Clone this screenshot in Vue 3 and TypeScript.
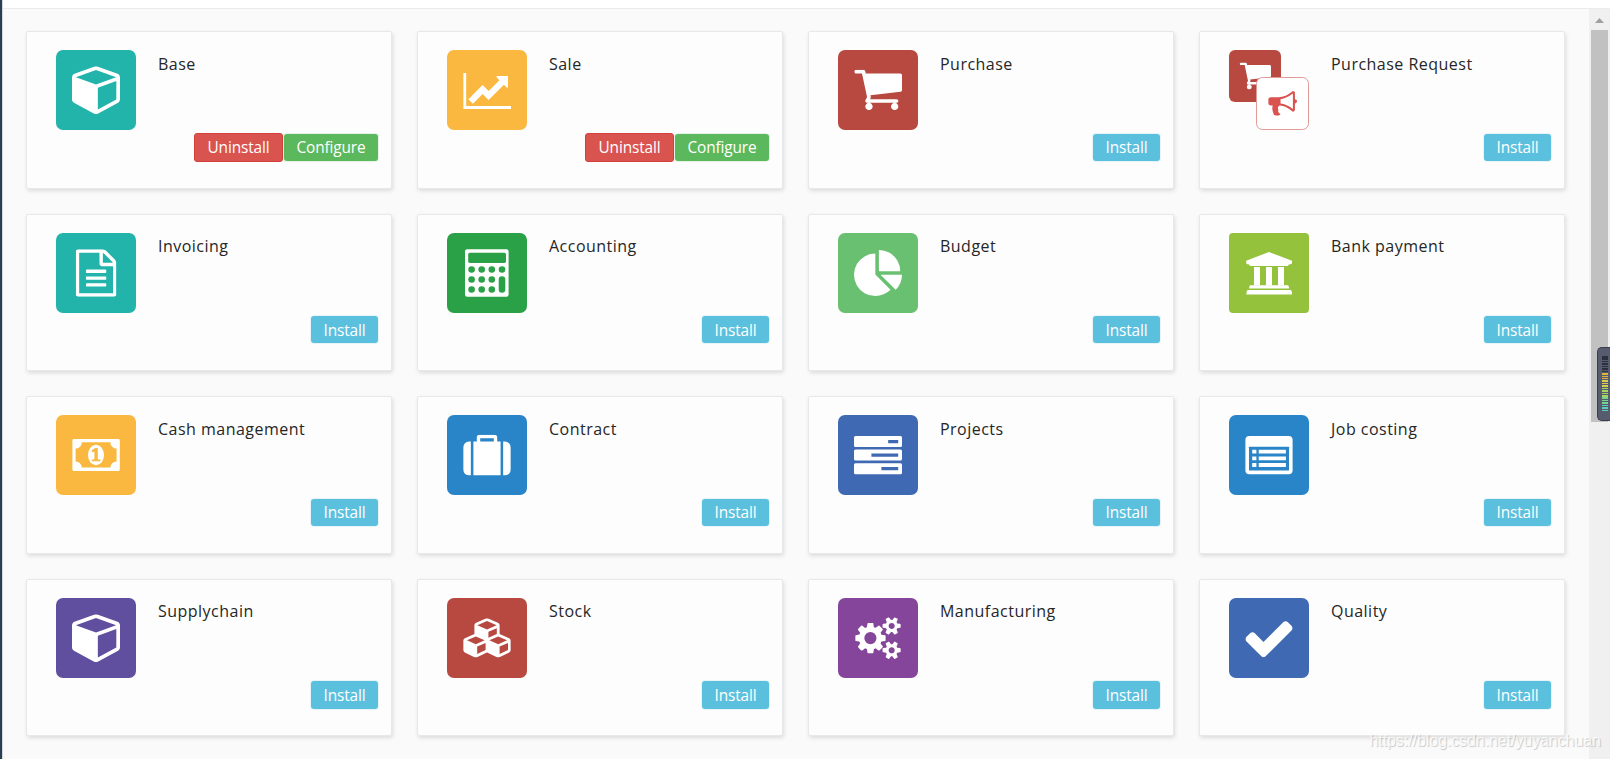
<script setup lang="ts">
interface Glyph {
  name: string
  /** glyph bounds in its own units */
  view: string
  x: number
  y: number
  w: number
  h: number
  d: string
}

interface AppModule {
  title: string
  color: string
  icon: string
  installed?: boolean
}

const glyphs: Record<string, Glyph> = {
  cube: {
    name: 'cube', view: '0 128 1664 1664', x: 16, y: 16.2, w: 48, h: 48,
    d: 'M896 1629l640-349v-636l-640 233v752zm-64-865l698-254-698-254-698 254zm832-252v768q0 35-18 65t-49 47l-704 384q-28 16-61 16t-61-16l-704-384q-31-17-49-47t-18-65v-768q0-40 23-73t61-47l704-256q22-8 44-8t44 8l704 256q38 14 61 47t23 73z',
  },
  chart: {
    name: 'chart', view: '0 128 2048 1536', x: 16.2, y: 23, w: 47.8, h: 36,
    d: 'M2048 1536v128h-2048v-1536h128v1408h1920zm-128-1248v435q0 21-19.5 29.5t-35.5-7.5l-121-121-633 633q-10 10-23 10t-23-10l-233-233-416 416-192-192 585-585q10-10 23-10t23 10l233 233 464-464-121-121q-16-16-7.5-35.5t29.5-19.5h435q14 0 23 9t9 23z',
  },
  cart: {
    name: 'cart', view: '0 256 1664 1408', x: 16.3, y: 19.8, w: 47.7, h: 40.4,
    d: 'M640 1536q0 52-38 90t-90 38-90-38-38-90 38-90 90-38 90 38 38 90zm896 0q0 52-38 90t-90 38-90-38-38-90 38-90 90-38 90 38 38 90zm128-1088v512q0 24-16.5 42.5t-40.5 21.5l-1044 122q13 60 13 70 0 16-24 64h920q26 0 45 19t19 45-19 45-45 19h-1024q-26 0-45-19t-19-45q0-11 8-31.5t16-36 21.5-40 15.5-29.5l-177-823h-204q-26 0-45-19t-19-45 19-45 45-19h256q16 0 28.5 6.5t19.5 15.5 13 24.5 8 26 5.5 29.5 4.5 26h1201q26 0 45 19t19 45z',
  },
  horn: {
    name: 'horn', view: '0 128 1792 1536', x: 39.2, y: 41, w: 28.8, h: 24.8,
    d: 'M1664 640q53 0 90.5 37.5t37.5 90.5-37.5 90.5-90.5 37.5v384q0 52-38 90t-90 38q-417-347-812-380-58 19-91 66t-31 100.5 40 92.5q-20 33-23 65.5t6 58 33.5 55 48 50 61.5 50.5q-29 58-111.5 83t-168.5 11.5-132-55.5q-7-23-29.5-87.5t-32-94.5-23-89-15-101 3.5-98.5 22-110.5h-122q-66 0-113-47t-47-113v-192q0-66 47-113t113-47h480q435 0 896-384 52 0 90 38t38 90v384zm-128 604v-954q-394 302-768 343v270q377 42 768 341z',
  },
  file: {
    name: 'file', view: '0 0 1536 1792', x: 19.8, y: 16.3, w: 40.6, h: 47.4,
    d: 'M1468 380q28 28 48 76t20 88v1152q0 40-28 68t-68 28h-1344q-40 0-68-28t-28-68v-1600q0-40 28-68t68-28h896q40 0 88 20t76 48zm-444-244v376h376q-10-29-22-41l-313-313q-12-12-41-22zm384 1528v-1024h-416q-40 0-68-28t-28-68v-416h-768v1536h1280zM384 800q0-14 9-23t23-9h704q14 0 23 9t9 23v64q0 14-9 23t-23 9h-704q-14 0-23-9t-9-23v-64zM1120 1024q14 0 23 9t9 23v64q0 14-9 23t-23 9h-704q-14 0-23-9t-9-23v-64q0-14 9-23t23-9h704zM1120 1280q14 0 23 9t9 23v64q0 14-9 23t-23 9h-704q-14 0-23-9t-9-23v-64q0-14 9-23t23-9h704z',
  },
  pie: {
    name: 'pie', view: '0 0 1728 1664', x: 16, y: 17, w: 48, h: 46,
    d: 'M768 890l546 546q-106 108-247.5 168t-298.5 60q-209 0-385.5-103t-279.5-279.5-103-385.5 103-385.5 279.5-279.5 385.5-103v762zm187 6h773q0 157-60 298.5t-168 247.5zm709-128h-768v-768q209 0 385.5 103t279.5 279.5 103 385.5z',
  },
  suitcase: {
    name: 'suitcase', view: '0 128 1792 1536', x: 16.2, y: 19.8, w: 47.6, h: 40.6,
    d: 'M640 384h512v-128h-512v128zm-352 0v1280h-64q-92 0-158-66t-66-158v-832q0-92 66-158t158-66h64zm1120 0v1280h-1024v-1280h128v-160q0-40 28-68t68-28h576q40 0 68 28t28 68v160h128zm384 224v832q0 92-66 158t-158 66h-64v-1280h64q92 0 158 66t66 158z',
  },
  cubes: {
    name: 'cubes', view: '0 0 2176 1792', x: 16.2, y: 20.3, w: 47.6, h: 39.3,
    d: 'M640 1632l384-192v-314l-384 164v342zm-64-454l404-173-404-173-404 173zm1088 454l384-192v-314l-384 164v342zm-64-454l404-173-404-173-404 173zm-448-293l384-165v-266l-384 164v267zm-64-379l441-189-441-189-441 189zm1088 518v416q0 36-19 67t-52 47l-448 224q-25 14-57 14t-57-14l-448-224q-4-2-7-4-2 2-7 4l-448 224q-25 14-57 14t-57-14l-448-224q-33-16-52-47t-19-67v-416q0-38 21.5-70t56.5-48l434-186v-400q0-38 21.5-70t56.5-48l448-192q23-10 50-10t50 10l448 192q35 16 56.5 48t21.5 70v400l434 186q36 16 57 48t21 70z',
  },
  cogs: {
    name: 'cogs', view: '0 16 1920 1760', x: 17.2, y: 19.2, w: 45.6, h: 41.8,
    d: 'M896 896q0-106-75-181t-181-75-181 75-75 181 75 181 181 75 181-75 75-181zm768 512q0-52-38-90t-90-38-90 38-38 90q0 53 37.5 90.5t90.5 37.5 90.5-37.5 37.5-90.5zm0-1024q0-52-38-90t-90-38-90 38-38 90q0 53 37.5 90.5t90.5 37.5 90.5-37.5 37.5-90.5zm-384 421v185q0 10-7 19.5t-16 10.5l-155 24q-11 35-32 76 34 48 90 115 7 11 7 20 0 12-7 19-23 30-82.5 89.5t-78.5 59.5q-11 0-21-7l-115-90q-37 19-77 31-11 108-23 155-7 24-30 24h-186q-11 0-20-7.5t-10-17.5l-23-153q-34-10-75-31l-118 89q-7 7-20 7-11 0-21-8-144-133-144-160 0-9 7-19 10-14 41-53t47-61q-23-44-35-82l-152-24q-10-1-17-9.5t-7-19.5v-185q0-10 7-19.5t16-10.5l155-24q11-35 32-76-34-48-90-115-7-11-7-20 0-12 7-20 22-30 82-89t79-59q11 0 21 7l115 90q34-18 77-32 11-108 23-154 7-24 30-24h186q11 0 20 7.5t10 17.5l23 153q34 10 75 31l118-89q8-7 20-7 11 0 21 8 144 133 144 160 0 8-7 19-12 16-42 54t-45 60q23 48 34 82l152 23q10 2 17 10.5t7 19.5zm640 533v140q0 16-149 31-12 27-30 52 51 113 51 138 0 4-4 7-122 71-124 71-8 0-46-47t-52-68q-20 2-30 2t-30-2q-14 21-52 68t-46 47q-2 0-124-71-4-3-4-7 0-25 51-138-18-25-30-52-149-15-149-31v-140q0-16 149-31 13-29 30-52-51-113-51-138 0-4 4-7 4-2 35-20t59-34 30-16q8 0 46 46.5t52 67.5q20-2 30-2t30 2q51-71 92-112l6-2q4 0 124 70 4 3 4 7 0 25-51 138 17 23 30 52 149 15 149 31zm0-1024v140q0 16-149 31-12 27-30 52 51 113 51 138 0 4-4 7-122 71-124 71-8 0-46-47t-52-68q-20 2-30 2t-30-2q-14 21-52 68t-46 47q-2 0-124-71-4-3-4-7 0-25 51-138-18-25-30-52-149-15-149-31v-140q0-16 149-31 13-29 30-52-51-113-51-138 0-4 4-7 4-2 35-20t59-34 30-16q8 0 46 46.5t52 67.5q20-2 30-2t30 2q51-71 92-112l6-2q4 0 124 70 4 3 4 7 0 25-51 138 17 23 30 52 149 15 149 31z',
  },
  check: {
    name: 'check', view: '121 270 1550 1252', x: 16.4, y: 21.2, w: 47.2, h: 38,
    d: 'M1671 566q0 40-28 68l-724 724-136 136q-28 28-68 28t-68-28l-136-136-362-362q-28-28-28-68t28-68l136-136q28-28 68-28t68 28l294 295 656-657q28-28 68-28t68 28l136 136q28 28 28 68z',
  },
}

const modules: AppModule[] = [
  { title: 'Base', color: '#22b4aa', icon: 'cube', installed: true },
  { title: 'Sale', color: '#fab841', icon: 'chart', installed: true },
  { title: 'Purchase', color: '#b74941', icon: 'cart' },
  { title: 'Purchase Request', color: '#b74941', icon: 'request' },
  { title: 'Invoicing', color: '#22b4aa', icon: 'file' },
  { title: 'Accounting', color: '#2ba147', icon: 'calculator' },
  { title: 'Budget', color: '#6ac071', icon: 'pie' },
  { title: 'Bank payment', color: '#95c23d', icon: 'bank' },
  { title: 'Cash management', color: '#fab841', icon: 'money' },
  { title: 'Contract', color: '#2985c7', icon: 'suitcase' },
  { title: 'Projects', color: '#3f6ab3', icon: 'tasks' },
  { title: 'Job costing', color: '#2985c7', icon: 'list' },
  { title: 'Supplychain', color: '#604e9f', icon: 'cube' },
  { title: 'Stock', color: '#b74941', icon: 'cubes' },
  { title: 'Manufacturing', color: '#85459a', icon: 'cogs' },
  { title: 'Quality', color: '#3f6ab3', icon: 'check' },
]

const keypad = [36.5, 46.5, 56.5].flatMap((y, row) =>
  [24.6, 34.7, 44.8, 55].filter((_, col) => row === 0 || col < 3).map((x) => ({ x, y })),
)

const meterTicks = Array.from({ length: 23 }, (_, i) => {
  if (i < 7) return '#2c303c'
  if (i < 10) return '#e0b040'
  if (i < 13) return '#d6cf50'
  if (i < 17) return '#a5d660'
  if (i < 20) return '#76d48c'
  return '#58d0ba'
})
</script>

<template>
  <div class="page">
    <aside class="rail"></aside>
    <div class="main">
      <header class="topbar"></header>
      <div class="body">
        <section class="grid">
          <article v-for="m in modules" :key="m.title" class="card">
            <svg class="icon" viewBox="0 0 80 80" width="80" height="80">
              <template v-if="m.icon === 'request'">
                <rect width="52" height="52" rx="6" :fill="m.color" />
                <svg x="10.6" y="12.6" width="31.4" height="26.8" :viewBox="glyphs.cart.view" preserveAspectRatio="none">
                  <path :d="glyphs.cart.d" fill="#fff" />
                </svg>
                <rect x="27.5" y="27.5" width="52" height="52" rx="6" fill="#fff" stroke="#e09a98" />
                <svg :x="glyphs.horn.x" :y="glyphs.horn.y" :width="glyphs.horn.w" :height="glyphs.horn.h" :viewBox="glyphs.horn.view" preserveAspectRatio="none">
                  <path :d="glyphs.horn.d" fill="#d9534f" />
                </svg>
              </template>
              <template v-else>
                <rect width="80" height="80" :rx="m.icon === 'bank' ? 4 : 7" :fill="m.color" />
                <svg
                  v-if="glyphs[m.icon]"
                  :x="glyphs[m.icon].x"
                  :y="glyphs[m.icon].y"
                  :width="glyphs[m.icon].w"
                  :height="glyphs[m.icon].h"
                  :viewBox="glyphs[m.icon].view"
                  preserveAspectRatio="none"
                >
                  <path :d="glyphs[m.icon].d" fill="#fff" />
                </svg>
                <g v-else-if="m.icon === 'calculator'" :fill="m.color">
                  <rect x="18" y="16.3" width="43.6" height="47.4" rx="2.2" fill="#fff" />
                  <rect x="21.2" y="19.7" width="37.8" height="10.2" rx="1.6" />
                  <circle v-for="(k, i) in keypad" :key="i" :cx="k.x" :cy="k.y" r="3.3" />
                  <rect x="51.7" y="43.2" width="6.6" height="16.6" rx="3.3" />
                </g>
                <g v-else-if="m.icon === 'bank'" fill="#fff">
                  <path d="M40 19L63 27.7V30Q63 31 61.6 31.2L59.6 31.6V32Q59.4 33 58 33H22Q20.6 33 20.4 32V31.6L18.4 31.2Q17.2 31 17.2 30V27.7Z" />
                  <path d="M25 34h6v18.4h-6zM37 34h6v18.4h-6zM49 34h6v18.4h-6z" />
                  <path d="M21.5 52.3H58.5Q60 52.3 60 55.4H20.2Q20.2 52.3 21.5 52.3ZM19 57H61.5Q63 57 63 61.6H17.4Q17.4 57 19 57Z" />
                </g>
                <g v-else-if="m.icon === 'money'">
                  <rect x="16.4" y="24" width="47.4" height="32" rx="1.4" fill="#fff" />
                  <path d="M25.8 27.3H54.4A6.2 6.2 0 0 0 60.6 33.6V46.4A6.2 6.2 0 0 0 54.4 52.6H25.8A6.2 6.2 0 0 0 19.6 46.4V33.6A6.2 6.2 0 0 0 25.8 27.3Z" :fill="m.color" />
                  <ellipse cx="40" cy="40" rx="8" ry="10.2" fill="#fff" />
                  <path d="M38.4 46.2V36.4L36.9 37.6 35.4 35.8 39.2 33H41.8V44.4H44.4V46.2H35.8V44.4H38.4Z" :fill="m.color" />
                </g>
                <g v-else-if="m.icon === 'tasks'" :fill="m.color">
                  <path d="M17.5 21h45q1.5 0 1.5 1.5v8q0 1.5-1.5 1.5h-45q-1.5 0-1.5-1.5v-8q0-1.5 1.5-1.5zM17.5 34.6h45q1.5 0 1.5 1.5v8q0 1.5-1.5 1.5h-45q-1.5 0-1.5-1.5v-8q0-1.5 1.5-1.5zM17.5 48.2h45q1.5 0 1.5 1.5v8q0 1.5-1.5 1.5h-45q-1.5 0-1.5-1.5v-8q0-1.5 1.5-1.5z" fill="#fff" />
                  <path d="M50.2 25h10v3.3h-10zM33.4 38.4h26.8v3.3h-26.8zM43.4 52h16.8v3.3h-16.8z" />
                </g>
                <g v-else-if="m.icon === 'list'" fill="#fff">
                  <rect x="16.4" y="21" width="47.2" height="38.2" rx="4" />
                  <rect x="20" y="31.7" width="40" height="23.8" rx="0.6" :fill="m.color" />
                  <path d="M23.2 34.7h4.2v3.8h-4.2zM23.2 41.4h4.2v3.8h-4.2zM23.2 48.1h4.2v3.8h-4.2zM29.7 34.7h27.2v3.8h-27.2zM29.7 41.4h27.2v3.8h-27.2zM29.7 48.1h27.2v3.8h-27.2z" />
                </g>
              </template>
            </svg>
            <div class="info">
              <h4 class="title">{{ m.title }}</h4>
              <div class="actions">
                <template v-if="m.installed">
                  <button class="btn danger">Uninstall</button>
                  <button class="btn success">Configure</button>
                </template>
                <button v-else class="btn primary">Install</button>
              </div>
            </div>
          </article>
        </section>
        <div class="scrollbar">
          <svg class="arrow" width="9" height="5" viewBox="0 0 9 5"><path d="M4.5 0L9 5H0z" fill="#a0a0a0" /></svg>
          <div class="thumb"></div>
        </div>
      </div>
    </div>
    <div class="meter">
      <span v-for="(c, i) in meterTicks" :key="i" class="tick" :style="{ background: c }"></span>
    </div>
    <div class="watermark">https://blog.csdn.net/yuyanchuan</div>
  </div>
</template>

<style>
html,
body {
  margin: 0;
  overflow: hidden;
}
</style>

<style scoped>
.page {
  position: relative;
  display: flex;
  width: 100vw;
  height: 100vh;
  overflow: hidden;
  background: #fafafa;
  font-family: 'Open Sans', 'Noto Sans', sans-serif;
}
.rail {
  flex: none;
  width: 2px;
  background: #2a3f54;
  border-right: 1px solid #d4d7db;
}
.main {
  flex: 1;
  display: flex;
  flex-direction: column;
  min-width: 0;
}
.topbar {
  flex: none;
  height: 8px;
  background: #fff;
  border-bottom: 1px solid #ebebeb;
}
.body {
  flex: 1;
  display: flex;
  min-height: 0;
}
.grid {
  flex: 1;
  display: grid;
  grid-template-columns: repeat(4, 366px);
  grid-auto-rows: 157.55px;
  gap: 25.05px 25px;
  align-content: start;
  padding: 22.1px 0 0 23px;
}
.card {
  box-sizing: border-box;
  display: flex;
  padding: 17.9px 13px 0 29px;
  background: #fdfdfd;
  border: 1px solid #e6e8ea;
  border-radius: 2px;
  box-shadow: 1px 2px 4px rgba(0, 0, 0, 0.12);
}
.icon {
  flex: none;
  display: block;
}
.info {
  flex: 1;
  display: flex;
  flex-direction: column;
  padding-left: 22px;
}
.title {
  margin: 2.6px 0 0;
  font-size: 16px;
  font-weight: 400;
  line-height: 22px;
  letter-spacing: 0.48px;
  color: #262626;
  white-space: nowrap;
}
.actions {
  display: flex;
  justify-content: flex-end;
  align-items: center;
  gap: 1px;
  height: 29.3px;
  margin-top: 58px;
}
.btn {
  box-sizing: border-box;
  height: 27.3px;
  padding: 0.6px 0 0;
  border: 0;
  border-radius: 3px;
  font: 400 15.4px/27px 'Open Sans', 'Noto Sans', sans-serif;
  letter-spacing: -0.12px;
  text-align: center;
  color: #fff;
  white-space: nowrap;
}
.primary {
  width: 67px;
  background: #5bc0de;
  box-shadow: 0 0 0 1px rgba(91, 192, 222, 0.14);
}
.success {
  width: 94px;
  background: #5cb85c;
  box-shadow: 0 0 0 1px rgba(92, 184, 92, 0.14);
}
.danger {
  width: 89px;
  height: 29.3px;
  padding: 0;
  background: #d9534f;
  border: 1px solid #d43f3a;
}
.scrollbar {
  flex: none;
  display: flex;
  flex-direction: column;
  align-items: center;
  box-sizing: border-box;
  width: 21px;
  padding-top: 9px;
  background: #f0f0f0;
}
.arrow {
  flex: none;
}
.thumb {
  flex: none;
  width: 17px;
  height: 392px;
  margin-top: 7px;
  background: #c1c1c1;
}
.meter {
  position: absolute;
  right: 0;
  top: 347px;
  display: flex;
  flex-direction: column;
  gap: 0.95px;
  box-sizing: border-box;
  width: 13px;
  height: 74px;
  padding: 8px 0 0 4px;
  background: #565c6e;
  border: 1px solid #3a3e4b;
  border-right: 0;
  border-radius: 5px 0 0 5px;
}
.tick {
  flex: none;
  width: 6px;
  height: 1.5px;
}
.watermark {
  position: absolute;
  left: 1369.5px;
  top: 731px;
  font: 16px/20px 'Liberation Sans', Arial, sans-serif;
  letter-spacing: -0.08px;
  color: rgba(255, 255, 255, 0.8);
  text-shadow: 1px 1px 1px rgba(0, 0, 0, 0.2);
  white-space: nowrap;
}
</style>
